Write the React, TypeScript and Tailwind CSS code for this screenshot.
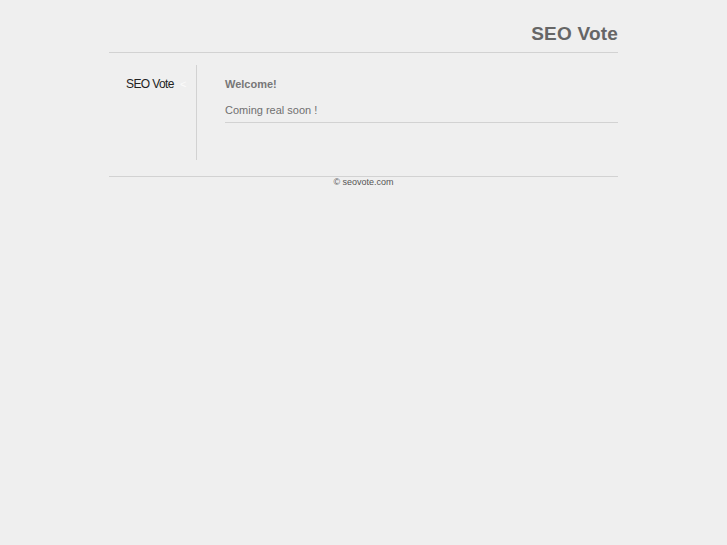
import React from "react";

export default function App() {
  return (
    <div className="min-h-[545px] w-full bg-[#efefef] font-['Liberation_Sans',Arial,sans-serif]">
      <div className="mx-auto w-[509px]">
        {/* HEADER */}
        <div className="border-b border-[#d2d2d2] pt-[22px] pb-[6px] text-right">
          <h1 className="text-[19px] leading-[24px] font-bold tracking-[0.2px] text-[#666666]">
            SEO Vote
          </h1>
        </div>

        {/* MAIN */}
        <div className="mt-[12px] flex h-[95px]">
          <div className="w-[88px] shrink-0 border-r border-[#d2d2d2] pt-[11px] pl-[17px] text-[12px] leading-[16px]">
            <span className="tracking-[-0.6px] text-[#222222]">SEO Vote</span>
            <span className="ml-[6px] text-[11px] text-[#fbfbfb]">&lt;</span>
          </div>
          <div className="flex-1 pt-[12px] pl-[28px]">
            <h2 className="text-[11px] leading-[14px] font-bold text-[#777777]">
              Welcome!
            </h2>
            <div className="mt-[12px] border-b border-[#d2d2d2] pb-[5px]">
              <p className="text-[11px] leading-[14px] text-[#707070]">
                Coming real soon !
              </p>
            </div>
          </div>
        </div>

        {/* FOOTER */}
        <div className="mt-[16px] border-t border-[#d2d2d2] text-center">
          <p className="text-[9px] leading-[11px] text-[#555555]">
            &copy; seovote.com
          </p>
        </div>
      </div>
    </div>
  );
}
